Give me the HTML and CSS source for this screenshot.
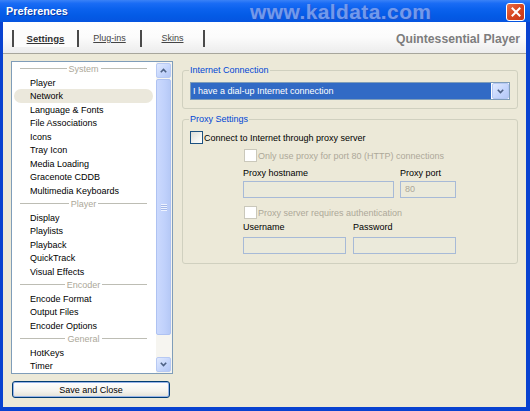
FILE: index.html
```html
<!doctype html>
<html lang="en">
  <head>
    <meta charset="UTF-8" />
    <meta name="viewport" content="width=device-width, initial-scale=1.0" />
    <title>Preferences</title>
    <link rel="stylesheet" href="styles.css">
  </head>
  <body>
    <div class="window">
      <div class="titlebar">
        <span class="title">Preferences</span>
        <span class="watermark">www.kaldata.com</span>
        <span class="close">
          <svg width="10" height="10" viewBox="0 0 10 10">
            <path d="M1.5 1.5 L8.5 8.5 M8.5 1.5 L1.5 8.5" stroke="#fff" stroke-width="2" stroke-linecap="square"/>
          </svg>
        </span>
      </div>

      <div class="frame">
        <div class="header">
          <div class="tabs">
            <a class="tab active">Settings</a>
            <a class="tab">Plug-ins</a>
            <a class="tab">Skins</a>
          </div>
          <div class="brand">Quintessential Player</div>
        </div>

        <div class="main">
          <div class="sidebar">
            <div class="list">
              <ul class="items">
                <li class="group"><span>System</span></li>
                <li>Player</li>
                <li class="current">Network</li>
                <li>Language &amp; Fonts</li>
                <li>File Associations</li>
                <li>Icons</li>
                <li>Tray Icon</li>
                <li>Media Loading</li>
                <li>Gracenote CDDB</li>
                <li>Multimedia Keyboards</li>
                <li class="group"><span>Player</span></li>
                <li>Display</li>
                <li>Playlists</li>
                <li>Playback</li>
                <li>QuickTrack</li>
                <li>Visual Effects</li>
                <li class="group"><span>Encoder</span></li>
                <li>Encode Format</li>
                <li>Output Files</li>
                <li>Encoder Options</li>
                <li class="group"><span>General</span></li>
                <li>HotKeys</li>
                <li>Timer</li>
              </ul>
              <div class="scrollbar">
                <div class="sb-btn">
                  <svg width="7" height="5" viewBox="0 0 7 5"><polyline points="0.8,4.2 3.5,1.4 6.2,4.2" fill="none" stroke="#4D6185" stroke-width="1.6"/></svg>
                </div>
                <div class="thumb"><span class="grip"></span></div>
                <div class="track"></div>
                <div class="sb-btn">
                  <svg width="7" height="5" viewBox="0 0 7 5"><polyline points="0.8,0.8 3.5,3.6 6.2,0.8" fill="none" stroke="#4D6185" stroke-width="1.6"/></svg>
                </div>
              </div>
            </div>
            <button class="save">Save and Close</button>
          </div>

          <div class="panel">
            <fieldset class="box connection">
              <legend>Internet Connection</legend>
              <div class="select">
                <span class="select-value">I have a dial-up Internet connection</span>
                <span class="select-btn">
                  <svg width="7" height="5" viewBox="0 0 7 5"><polyline points="0.8,0.8 3.5,3.6 6.2,0.8" fill="none" stroke="#4D6185" stroke-width="1.6"/></svg>
                </span>
              </div>
            </fieldset>

            <fieldset class="box proxy">
              <legend>Proxy Settings</legend>
              <label class="check">
                <span class="checkbox"></span>Connect to Internet through proxy server
              </label>
              <div class="sub">
                <label class="check disabled">
                  <span class="checkbox"></span>Only use proxy for port 80 (HTTP) connections
                </label>
                <div class="fields first">
                  <div class="field host">
                    <span class="label">Proxy hostname</span>
                    <span class="input"></span>
                  </div>
                  <div class="field port">
                    <span class="label">Proxy port</span>
                    <span class="input">80</span>
                  </div>
                </div>
                <label class="check disabled auth">
                  <span class="checkbox"></span>Proxy server requires authentication
                </label>
                <div class="fields second">
                  <div class="field user">
                    <span class="label">Username</span>
                    <span class="input"></span>
                  </div>
                  <div class="field pass">
                    <span class="label">Password</span>
                    <span class="input"></span>
                  </div>
                </div>
              </div>
            </fieldset>
          </div>
        </div>
      </div>
    </div>
  </body>
</html>
```

FILE: styles.css
```css
body {
  margin: 0;
  font-family: "Liberation Sans", Arial, sans-serif;
  font-size: 9px;
  color: #000;
}

.window {
  width: 530px;
  height: 411px;
  display: flex;
  flex-direction: column;
  background: #0842d0;
  overflow: hidden;
}

/* title bar */
.titlebar {
  position: relative;
  height: 22px;
  flex: none;
  display: flex;
  align-items: center;
  padding: 0 4px 0 6px;
  background: linear-gradient(#3a82f7 0%, #1a6cf5 15%, #0b62ee 40%, #045be6 70%, #0554e0 100%);
}

.title {
  color: #fff;
  font-weight: bold;
  font-size: 10.8px;
  text-shadow: 1px 1px 0 #0b3ca8;
  flex: 1;
}

.watermark {
  position: absolute;
  left: 250px;
  top: 0;
  line-height: 23px;
  font-size: 21px;
  font-weight: bold;
  letter-spacing: 0.4px;
  color: rgba(160, 190, 250, 0.62);
  text-shadow: 0 0 1px #3566d6, 1px 1px 0 rgba(30, 80, 200, 0.8);
}

.close {
  width: 17px;
  height: 16px;
  margin-top: 1px;
  margin-right: 1px;
  border: 1px solid #fff;
  border-radius: 3px;
  background: linear-gradient(135deg, #e8704c 0%, #d8461f 50%, #c5361a 100%);
  display: flex;
  align-items: center;
  justify-content: center;
}

/* window frame */
.frame {
  flex: 1;
  display: flex;
  flex-direction: column;
  margin: 0 4px 4px 3px;
  background: #ece9d8;
}

.header {
  height: 31px;
  flex: none;
  display: flex;
  align-items: flex-start;
  justify-content: space-between;
  background: linear-gradient(#ffffff 0%, #fbfbfb 50%, #ececec 100%);
  border-bottom: 1px solid #a7a69c;
}

.tabs {
  display: flex;
  margin: 8px 0 0 9px;
}

.tab {
  width: 61px;
  height: 17px;
  line-height: 17px;
  text-align: center;
  border-left: 2px solid #4a4a4a;
  color: #444;
  text-decoration: underline;
}

.tab:last-child {
  border-right: 2px solid #4a4a4a;
}

.tab.active {
  width: 63px;
  font-weight: bold;
  font-size: 9.6px;
  color: #333;
  background: #fcfcfc;
}

.brand {
  margin: 10px 6px 0 0;
  font-size: 12.2px;
  font-weight: bold;
  color: #7d7d7d;
}

/* body */
.main {
  flex: 1;
  display: flex;
  padding: 7px 8px 0 8px;
  gap: 9px;
}

.sidebar {
  width: 162px;
  display: flex;
  flex-direction: column;
}

.list {
  height: 311px;
  display: flex;
  border: 1px solid #7f9db9;
  background: #fff;
}

.items {
  flex: 1;
  margin: 0;
  padding: 0;
  list-style: none;
}

.items li {
  height: 13.5px;
  line-height: 14.5px;
  padding-left: 18px;
  white-space: nowrap;
}

.items li.current {
  margin: 0 3px 0 2px;
  padding-left: 16px;
  border-radius: 7px;
  background: #ebe8dc;
}

.items li.group {
  display: flex;
  align-items: center;
  margin: 0 9px 0 8px;
  padding: 0;
  color: #aca899;
}

.group::before,
.group::after {
  content: "";
  flex: 1;
  height: 1px;
  background: #bdbdb4;
}

.group span {
  padding: 0 2px;
}

/* scrollbar */
.scrollbar {
  width: 16px;
  display: flex;
  flex-direction: column;
  background: #f6f5f0;
}

.sb-btn {
  height: 13px;
  margin: 1px 1px 1px 0;
  border: 1px solid #b7c9f3;
  border-radius: 2px;
  background: linear-gradient(135deg, #e1eafe 0%, #c3d4fc 60%, #b3c7f6 100%);
  display: flex;
  align-items: center;
  justify-content: center;
}

.thumb {
  height: 254px;
  margin-right: 1px;
  border: 1px solid #aec2f2;
  border-radius: 2px;
  background: linear-gradient(90deg, #cbd9fd 0%, #c0d1fb 60%, #b6c9f6 100%);
  display: flex;
  align-items: center;
  justify-content: center;
}

.grip {
  width: 6px;
  height: 7px;
  background: repeating-linear-gradient(#eef3ff 0 1px, #a4b8e8 1px 2px);
}

.track {
  flex: 1;
}

.save {
  margin: 7px 0 0 1px;
  width: 158px;
  height: 17px;
  padding: 0;
  border: 1px solid #003c74;
  border-radius: 3px;
  background: linear-gradient(#ffffff 0%, #f4f3ee 60%, #e3e1d6 100%);
  box-shadow: inset 0 0 0 1px #98b4e8;
  font-family: inherit;
  font-size: 9px;
  color: #000;
}

/* right panel */
.panel {
  flex: 1;
  display: flex;
  flex-direction: column;
  gap: 4px;
  padding-top: 3px;
}

.box {
  margin: 0;
  padding: 5px 7px 8px;
  border: 1px solid #d0d0bf;
  border-radius: 3px;
}

.box legend {
  margin-left: -1px;
  padding: 0 1px;
  line-height: 13px;
  color: #0046d5;
}

.select {
  height: 16px;
  display: flex;
  border: 1px solid #7f9db9;
  background: #fff;
}

.select-value {
  flex: 1;
  margin: 0 1px 0 0;
  padding-left: 2px;
  line-height: 16px;
  color: #fff;
  background: #316ac5;
}

.select-btn {
  width: 15px;
  border: 1px solid #b5c8f3;
  border-radius: 2px;
  background: linear-gradient(135deg, #e1eafe 0%, #c3d4fc 60%, #b3c7f6 100%);
  display: flex;
  align-items: center;
  justify-content: center;
}

.proxy {
  padding-top: 5px;
  padding-bottom: 9px;
}

.check {
  height: 13px;
  display: flex;
  align-items: center;
  gap: 1px;
}

.checkbox {
  width: 11px;
  height: 11px;
  border: 1px solid #1c5180;
  background: linear-gradient(135deg, #dcdcd6 0%, #f4f4f0 60%, #ffffff 100%);
}

.check.disabled {
  color: #aca899;
}

.check.disabled .checkbox {
  border-color: #cac8bb;
  background: #fff;
}

.sub {
  margin: 5px 0 0 53px;
  width: 213px;
}

.sub .check {
  margin-left: 1px;
}

.fields {
  display: flex;
  gap: 6px;
  margin-top: 5px;
}

.fields.second {
  gap: 7px;
  margin-top: 2px;
}

.field {
  display: flex;
  flex-direction: column;
}

.label {
  line-height: 13px;
}

.input {
  height: 15px;
  margin-top: 1px;
  padding-left: 4px;
  line-height: 15px;
  border: 1px solid #a7bad7;
  background: #ebeadb;
  color: #aca899;
}

.second .input {
  margin-top: 3px;
}

.host { width: 151px; }
.port { width: 56px; }
.user, .pass { width: 103px; }

.check.auth {
  margin-top: 8px;
}
```
